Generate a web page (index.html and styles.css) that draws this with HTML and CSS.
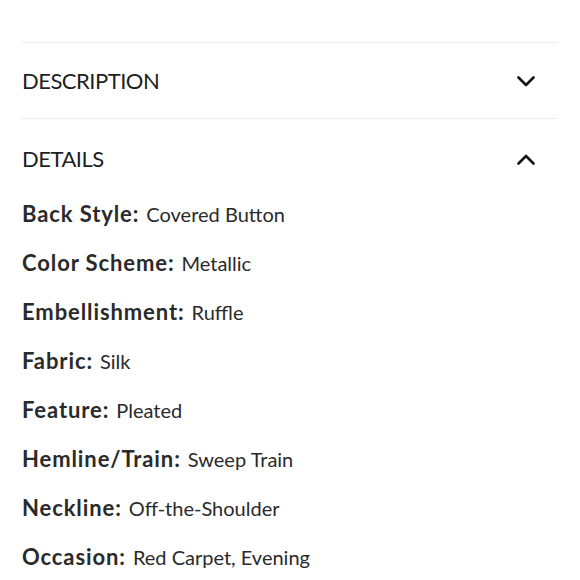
FILE: index.html
```html
<!DOCTYPE html>
<html lang="en">
<head>
  <meta charset="UTF-8" />
  <meta name="viewport" content="width=device-width, initial-scale=1.0" />
  <title>Product Info</title>
  <link rel="stylesheet" href="styles.css">
</head>
<body>
  <div class="accordion">
    <div class="acc-item">
      <div class="acc-head">
        <span>DESCRIPTION</span>
        <svg class="chevron" width="18" height="11" viewBox="0 0 18 11"><path d="M1.5 1.5 L9 9 L16.5 1.5" fill="none" stroke="#111" stroke-width="2.6" stroke-linecap="round" stroke-linejoin="round"/></svg>
      </div>
    </div>
    <div class="acc-item open">
      <div class="acc-head">
        <span>DETAILS</span>
        <svg class="chevron" width="18" height="11" viewBox="0 0 18 11"><path d="M1.5 9.5 L9 2 L16.5 9.5" fill="none" stroke="#111" stroke-width="2.6" stroke-linecap="round" stroke-linejoin="round"/></svg>
      </div>
      <ul class="specs">
        <li><b>Back Style:</b> Covered Button</li>
        <li><b>Color Scheme:</b> Metallic</li>
        <li><b>Embellishment:</b> Ruffle</li>
        <li><b>Fabric:</b> Silk</li>
        <li><b>Feature:</b> Pleated</li>
        <li><b>Hemline/Train:</b> Sweep Train</li>
        <li><b>Neckline:</b> Off-the-Shoulder</li>
        <li><b>Occasion:</b> Red Carpet, Evening</li>
      </ul>
    </div>
  </div>
</body>
</html>
```

FILE: styles.css
```css
body {
  margin: 0;
  background: #fff;
  color: #222;
  font-family: Lato, "Noto Sans", sans-serif;
  overflow: hidden;
}
.accordion {
  padding: 42px 22px 0 22px;
}
.acc-item {
  border-top: 1px solid #ececec;
}
.acc-head {
  display: flex;
  align-items: center;
  justify-content: space-between;
  padding: 26px 23px 25px 0;
  font-size: 22px;
  line-height: 24px;
  letter-spacing: -0.5px;
  color: #1f1f1f;
}
.acc-item.open .acc-head {
  padding-top: 28px;
  padding-bottom: 18px;
}
.specs {
  list-style: none;
  margin: 0;
  padding: 0;
}
.specs li {
  display: flex;
  align-items: baseline;
  gap: 7px;
  height: 49px;
  line-height: 49px;
  font-size: 20px;
  color: #2a2a2a;
  white-space: nowrap;
}
.specs b {
  font-size: 22px;
  font-weight: 700;
  letter-spacing: 0.9px;
}
```
